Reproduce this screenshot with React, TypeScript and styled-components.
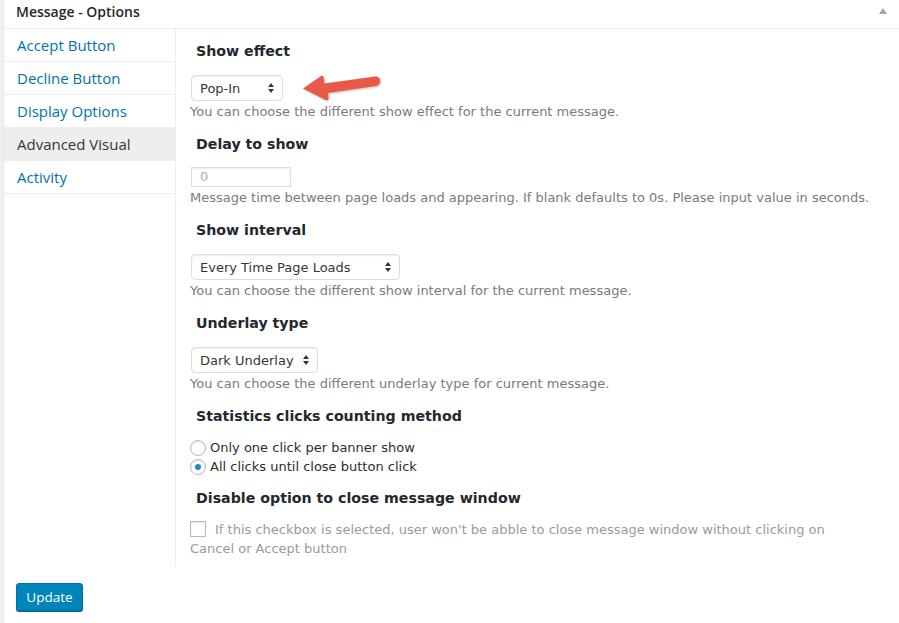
import styled, { createGlobalStyle } from "styled-components";

const GlobalStyle = createGlobalStyle`
  html, body {
    margin: 0;
    padding: 0;
    background: #f1f1f1;
  }
`;

const Page = styled.div`
  width: 899px;
  height: 623px;
  overflow: hidden;
  box-sizing: border-box;
  padding-left: 3px;
`;

const Panel = styled.div`
  background: #fff;
  border-left: 1px solid #e5e5e5;
  height: 100%;
  box-sizing: border-box;
`;

const PanelHeader = styled.div`
  height: 28px;
  border-bottom: 1px solid #eeeeee;
  display: flex;
  align-items: center;
  justify-content: space-between;
  padding: 0 12px 0 12px;
`;

const PanelTitle = styled.h2`
  margin: -4px 0 0;
  font-family: "Open Sans", "Liberation Sans", sans-serif;
  font-size: 14px;
  font-weight: 600;
  color: #23282d;
  line-height: 1;
`;

const Toggle = styled.span`
  width: 0;
  height: 0;
  border-left: 4px solid transparent;
  border-right: 4px solid transparent;
  border-bottom: 6px solid #a0a5aa;
  margin-top: -6px;
`;

const PanelBody = styled.div`
  display: flex;
`;

const Tabs = styled.ul`
  list-style: none;
  margin: 0;
  padding: 0;
  width: 171px;
  flex-shrink: 0;
  border-right: 1px solid #eeeeee;
`;

const Tab = styled.li<{ $active?: boolean }>`
  height: 32px;
  display: flex;
  align-items: center;
  padding-left: 13px;
  border-bottom: 1px solid #eeeeee;
  background: ${(p) => (p.$active ? "#eeeeee" : "#fff")};
  color: ${(p) => (p.$active ? "#32373c" : "#0073aa")};
  font-family: "Open Sans", "Liberation Sans", sans-serif;
  font-size: 15px;
`;

const Content = styled.div`
  flex: 1;
  padding: 12px 20px 8px 14px;
  font-family: "DejaVu Sans", Verdana, sans-serif;
  font-size: 13px;
  color: #32373c;
`;

const Section = styled.section`
  & + & {
    margin-top: 12px;
  }
`;

const Heading = styled.h3`
  margin: 0;
  padding-left: 6px;
  height: 20px;
  line-height: 20px;
  font-size: 14.2px;
  font-weight: bold;
  color: #23282d;
`;

const FieldRow = styled.div<{ $gap?: number }>`
  display: flex;
  align-items: center;
  margin-top: ${(p) => p.$gap ?? 14}px;
`;

const SelectBox = styled.div<{ $width: number }>`
  box-sizing: border-box;
  width: ${(p) => p.$width}px;
  height: 26px;
  margin-left: 1px;
  border: 1px solid #dddddd;
  border-radius: 4px;
  box-shadow: inset 0 1px 2px rgba(0, 0, 0, 0.07);
  display: flex;
  align-items: center;
  justify-content: space-between;
  padding: 0 8px 0 8px;
  color: #32373c;
`;

const TextInput = styled.div`
  box-sizing: border-box;
  width: 100px;
  height: 20px;
  margin-left: 1px;
  border: 1px solid #dddddd;
  box-shadow: inset 0 1px 2px rgba(0, 0, 0, 0.07);
  padding-left: 8px;
  line-height: 18px;
  color: #b0b0b0;
`;

const Description = styled.p`
  margin: 1px 0 0;
  line-height: 20px;
  color: #7a7a7a;
`;

const RadioList = styled.div`
  margin-top: 12px;
  display: flex;
  flex-direction: column;
`;

const RadioRow = styled.label`
  display: flex;
  align-items: center;
  height: 19px;
  gap: 4px;
  color: #2a2e33;
`;

const RadioCircle = styled.span<{ $checked?: boolean }>`
  box-sizing: border-box;
  width: 16px;
  height: 16px;
  border-radius: 50%;
  border: 1px solid #b4b9be;
  box-shadow: inset 0 1px 2px rgba(0, 0, 0, 0.1);
  display: flex;
  align-items: center;
  justify-content: center;
  &::after {
    content: "";
    width: 6px;
    height: 6px;
    border-radius: 50%;
    background: #1e8cbe;
    display: ${(p) => (p.$checked ? "block" : "none")};
  }
`;

const CheckText = styled.p`
  margin: 12px 0 0;
  line-height: 19px;
  color: #9a9a9a;
  max-width: 662px;
`;

const CheckBox = styled.span`
  display: inline-block;
  box-sizing: border-box;
  width: 16px;
  height: 16px;
  border: 1px solid #b4b9be;
  box-shadow: inset 0 1px 2px rgba(0, 0, 0, 0.1);
  vertical-align: -3px;
  margin-right: 9px;
`;

const Footer = styled.div`
  padding: 17px 0 0 12px;
`;

const UpdateButton = styled.button`
  width: 67px;
  height: 28px;
  border: 1px solid #0073aa;
  border-radius: 3px;
  background: #0085ba;
  box-shadow: 0 1px 0 #006799;
  color: #fff;
  font-family: "Open Sans", "Liberation Sans", sans-serif;
  font-size: 13.5px;
  padding: 0;
`;

const SelectArrows = () => (
  <svg width="6" height="10" viewBox="0 0 6 10">
    <path d="M3 0 L6 4 L0 4 Z M0 6 L6 6 L3 10 Z" fill="#32373c" />
  </svg>
);

const Pointer = () => (
  <svg
    width="82"
    height="32"
    viewBox="0 0 82 32"
    style={{ margin: "-3px 0 -3px 18px", filter: "drop-shadow(1px 1px 1px rgba(0,0,0,0.25))" }}
  >
    <path
      d="M2 16.5 L20 4 Q22 3 22.5 5 L23.5 11.5 L74 4.5 Q79 4 79 9 Q79 13 75 14 L27 21 L27.5 26.5 Q27 29 24.5 28 Z"
      fill="#e8594a"
    />
  </svg>
);

const tabs = ["Accept Button", "Decline Button", "Display Options", "Advanced Visual", "Activity"];

const App = () => {
  return (
    <Page>
      <GlobalStyle />
      <Panel>
        <PanelHeader>
          <PanelTitle>Message - Options</PanelTitle>
          <Toggle />
        </PanelHeader>
        <PanelBody>
          <Tabs>
            {tabs.map((t) => (
              <Tab key={t} $active={t === "Advanced Visual"}>
                {t}
              </Tab>
            ))}
          </Tabs>
          <Content>
            <Section>
              <Heading>Show effect</Heading>
              <FieldRow>
                <SelectBox $width={92}>
                  Pop-In
                  <SelectArrows />
                </SelectBox>
                <Pointer />
              </FieldRow>
              <Description>You can choose the different show effect for the current message.</Description>
            </Section>
            <Section>
              <Heading>Delay to show</Heading>
              <FieldRow $gap={13}>
                <TextInput>0</TextInput>
              </FieldRow>
              <Description>
                Message time between page loads and appearing. If blank defaults to 0s. Please input value in seconds.
              </Description>
            </Section>
            <Section>
              <Heading>Show interval</Heading>
              <FieldRow>
                <SelectBox $width={209}>
                  Every Time Page Loads
                  <SelectArrows />
                </SelectBox>
              </FieldRow>
              <Description>You can choose the different show interval for the current message.</Description>
            </Section>
            <Section>
              <Heading>Underlay type</Heading>
              <FieldRow>
                <SelectBox $width={127}>
                  Dark Underlay
                  <SelectArrows />
                </SelectBox>
              </FieldRow>
              <Description>You can choose the different underlay type for current message.</Description>
            </Section>
            <Section>
              <Heading>Statistics clicks counting method</Heading>
              <RadioList>
                <RadioRow>
                  <RadioCircle />
                  Only one click per banner show
                </RadioRow>
                <RadioRow>
                  <RadioCircle $checked />
                  All clicks until close button click
                </RadioRow>
              </RadioList>
            </Section>
            <Section>
              <Heading>Disable option to close message window</Heading>
              <CheckText>
                <CheckBox />
                If this checkbox is selected, user won't be abble to close message window without clicking on Cancel
                or Accept button
              </CheckText>
            </Section>
          </Content>
        </PanelBody>
        <Footer>
          <UpdateButton>Update</UpdateButton>
        </Footer>
      </Panel>
    </Page>
  );
};

export default App;
